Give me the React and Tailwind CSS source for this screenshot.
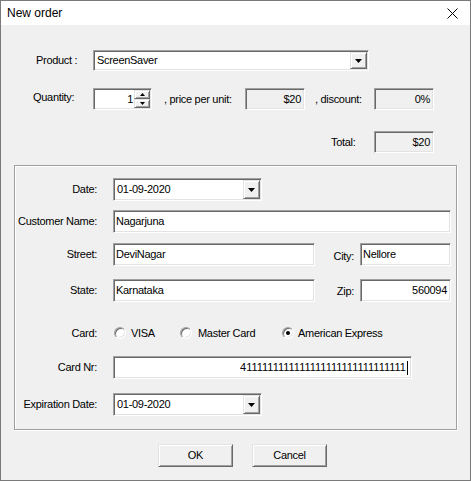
import React from 'react';

const sunken =
  'border border-t-[#a0a0a0] border-l-[#a0a0a0] border-r-white border-b-white shadow-[inset_1px_1px_0_#696969,inset_-1px_-1px_0_#e3e3e3]';
const raised =
  'border border-t-[#e3e3e3] border-l-[#e3e3e3] border-r-[#696969] border-b-[#696969] shadow-[inset_1px_1px_0_#fff,inset_-1px_-1px_0_#a0a0a0] bg-[#f0f0f0]';

function Arrow({ up = false, w = 7, h = 4 }) {
  return (
    <svg width={w} height={h} viewBox={`0 0 ${w} ${h}`}>
      {up ? (
        <polygon points={`0,${h} ${w},${h} ${w / 2},0`} fill="#000" />
      ) : (
        <polygon points={`0,0 ${w},0 ${w / 2},${h}`} fill="#000" />
      )}
    </svg>
  );
}

function Combo({ value, className }) {
  return (
    <div className={`${sunken} bg-white flex items-stretch p-[1px] ${className}`}>
      <div className="flex-1 flex items-center pl-[2px]">{value}</div>
      <div className={`${raised} w-[17px] flex items-center justify-center`}>
        <Arrow />
      </div>
    </div>
  );
}

function Field({ value, className = '', right = false, readOnly = false, children }) {
  return (
    <div
      className={`${sunken} ${readOnly ? 'bg-[#f0f0f0]' : 'bg-white'} flex items-center ${
        right ? 'justify-end pr-[3px]' : 'pl-[2px]'
      } ${className}`}
    >
      {value}
      {children}
    </div>
  );
}

function Radio({ checked }) {
  return (
    <div className="w-[12px] h-[12px] rounded-full border border-t-[#a0a0a0] border-l-[#a0a0a0] border-r-white border-b-white shadow-[inset_1px_1px_0_#696969,inset_-1px_-1px_0_#e3e3e3] bg-white flex items-center justify-center">
      {checked && <div className="w-[4px] h-[4px] rounded-full bg-black" />}
    </div>
  );
}

function Row({ label, className = '', children }) {
  return (
    <div className={`flex items-center h-[23px] ${className}`}>
      <div className="w-[82px] text-right mr-[16px] whitespace-nowrap">{label}</div>
      {children}
    </div>
  );
}

export default function App() {
  return (
    <div
      className="w-[471px] h-[481px] border border-[#7a7a7a] bg-[#f0f0f0] text-black text-[11px] tracking-[-0.3px] leading-none whitespace-nowrap flex flex-col"
      style={{ fontFamily: '"Liberation Sans", Arial, sans-serif' }}
    >
      {/* Title bar */}
      <div className="h-[24px] bg-white flex items-center justify-between pl-[6px] pr-[12px] tracking-normal">
        <span className="text-[12px]">New order</span>
        <svg width="11" height="11" viewBox="0 0 11 11">
          <path d="M0.5 0.5 L10.5 10.5 M10.5 0.5 L0.5 10.5" stroke="#000" strokeWidth="1" />
        </svg>
      </div>

      {/* Product */}
      <div className="flex items-center h-[21px] mt-[25px] ml-[35px]">
        <div className="w-[57px]">Product :</div>
        <Combo value="ScreenSaver" className="w-[276px] h-[21px]" />
      </div>

      {/* Quantity / price / discount */}
      <div className="flex items-center h-[22px] mt-[17px] ml-[32px]">
        <div className="w-[60px] -mt-[4px]">Quantity:</div>
        <div className={`${sunken} bg-white w-[59px] h-[22px] flex items-stretch p-[1px]`}>
          <div className="flex-1 flex items-center justify-end pr-[1px]">1</div>
          <div className="flex flex-col w-[16px]">
            <div className={`${raised} flex-1 flex items-center justify-center`}>
              <Arrow up w={5} h={3} />
            </div>
            <div className={`${raised} flex-1 flex items-center justify-center`}>
              <Arrow w={5} h={3} />
            </div>
          </div>
        </div>
        <div className="w-[81px] ml-[12px]">, price per unit:</div>
        <Field value="$20" right readOnly className="w-[60px] h-[22px]" />
        <div className="w-[59px] ml-[10px]">, discount:</div>
        <Field value="0%" right readOnly className="w-[60px] h-[22px]" />
      </div>

      {/* Total */}
      <div className="flex items-center h-[22px] mt-[21px] ml-[330px]">
        <div className="w-[43px]">Total:</div>
        <Field value="$20" right readOnly className="w-[60px] h-[22px]" />
      </div>

      {/* Customer group */}
      <div className="mt-[12px] ml-[13px] w-[443px] h-[265px] border border-[#a0a0a0] shadow-[inset_1px_1px_0_#fff,1px_1px_0_#fff] flex flex-col">
        <Row label="Date:" className="mt-[12px]">
          <Combo value="01-09-2020" className="w-[149px] h-[23px]" />
        </Row>
        <Row label="Customer Name:" className="mt-[9px]">
          <Field value="Nagarjuna" className="w-[338px] h-[23px]" />
        </Row>
        <Row label="Street:" className="mt-[10px]">
          <Field value="DeviNagar" className="w-[202px] h-[23px]" />
          <div className="w-[39px] text-right mr-[6px] mt-[4px]">City:</div>
          <Field value="Nellore" className="w-[91px] h-[23px]" />
        </Row>
        <Row label="State:" className="mt-[13px]">
          <Field value="Karnataka" className="w-[202px] h-[23px]" />
          <div className="w-[39px] text-right mr-[6px] mt-[2px]">Zip:</div>
          <Field value="560094" right className="w-[91px] h-[23px]" />
        </Row>
        <div className="flex items-center h-[14px] mt-[24px]">
          <div className="w-[82px] text-right mr-[16px]">Card:</div>
          <div className="flex items-center w-[66px] ml-[1px] gap-[5px]">
            <Radio />
            <span>VISA</span>
          </div>
          <div className="flex items-center w-[102px] gap-[6px]">
            <Radio />
            <span>Master Card</span>
          </div>
          <div className="flex items-center gap-[4px]">
            <Radio checked />
            <span>American Express</span>
          </div>
        </div>
        <Row label="Card Nr:" className="mt-[16px]">
          <Field right className="w-[299px] h-[23px]">
            <span className="tracking-normal">4111111111111111111111111111111</span>
            <span className="w-[1px] h-[14px] bg-black ml-[1px]" />
          </Field>
        </Row>
        <Row label="Expiration Date:" className="mt-[14px]">
          <Combo value="01-09-2020" className="w-[149px] h-[23px]" />
        </Row>
      </div>

      {/* Buttons */}
      <div className="flex mt-[14px] ml-[157px] gap-[19px]">
        <button className={`${raised} w-[75px] h-[23px] flex items-center justify-center`}>OK</button>
        <button className={`${raised} w-[75px] h-[23px] flex items-center justify-center`}>Cancel</button>
      </div>
    </div>
  );
}
